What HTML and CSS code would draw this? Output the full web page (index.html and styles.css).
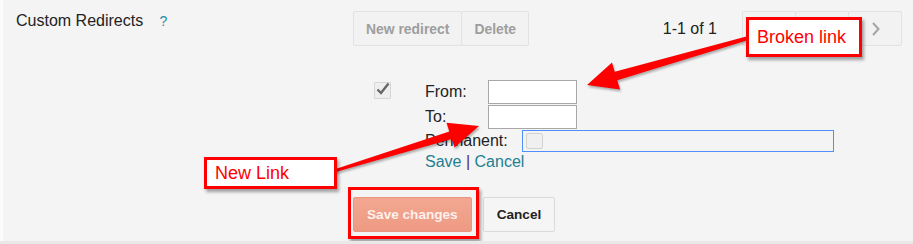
FILE: index.html
```html
<!DOCTYPE html>
<html lang="en">
<head>
    <meta charset="UTF-8">
    <title>Custom Redirects</title>
    <link rel="stylesheet" href="styles.css">
</head>
<body>
    <div class="panel">
        <div class="section">
            <div class="section-label">
                Custom Redirects <span class="help">?</span>
            </div>
            <div class="section-body">
                <div class="toolbar">
                    <div class="btn-group">
                        <button class="tb-btn">New redirect</button>
                        <button class="tb-btn">Delete</button>
                    </div>
                    <div class="pager">
                        <span class="count">1-1 of 1</span>
                        <div class="btn-group">
                            <button class="pg-btn"></button>
                            <button class="pg-btn"></button>
                            <button class="pg-btn">
                                <svg width="8" height="14" viewBox="0 0 8 14"><polyline points="1,1 6.5,7 1,13" fill="none" stroke="#a3a3a3" stroke-width="2"/></svg>
                            </button>
                        </div>
                    </div>
                </div>

                <div class="editor">
                    <div class="check-col">
                        <span class="check">
                            <svg width="17" height="17" viewBox="0 0 17 17"><polyline points="3.5,8.5 7,12 14.5,2.5" fill="none" stroke="#666" stroke-width="2.4"/></svg>
                        </span>
                    </div>
                    <div class="fields">
                        <div class="field">
                            <label for="from">From:</label>
                            <input type="text" id="from" class="txt">
                        </div>
                        <div class="field">
                            <label for="to">To:</label>
                            <input type="text" id="to" class="txt">
                        </div>
                        <div class="perm">
                            <span>Permanent:</span>
                            <div class="perm-box"><span class="cb"></span></div>
                        </div>
                        <div class="links">
                            <a href="#">Save</a> <span class="sep">|</span> <a href="#">Cancel</a>
                        </div>
                    </div>
                </div>

                <div class="actions">
                    <button class="btn-save">Save changes</button>
                    <button class="btn-cancel">Cancel</button>
                </div>
            </div>
        </div>

        <!-- annotations -->
        <svg class="arrows" width="913" height="244" viewBox="0 0 913 244">
            <polygon points="750,35.5 614.7,71.7 612,62.6 587,85 620,89.4 617.3,80.3 750,39.5" />
            <polygon points="334,169.5 449.3,131.4 446.5,122.8 479,126 454.5,147.6 451.7,139 334,172.5" />
        </svg>
        <div class="note note-broken">Broken link</div>
        <div class="note note-new">New Link</div>
        <div class="highlight"></div>
    </div>
</body>
</html>
```

FILE: styles.css
```css
body {
    margin: 0;
    font-family: "Liberation Sans", Arial, sans-serif;
    background-color: #e9e9e9;
    color: #222;
}
.panel {
    position: relative;
    height: 241px;
    border-left: 3px solid #fbfbfb;
    background-color: #f4f4f4;
    overflow: hidden;
}
.section {
    display: flex;
    padding-top: 11px;
}
.section-label {
    width: 350px;
    padding-left: 13px;
    box-sizing: border-box;
    font-size: 16px;
    line-height: 19px;
    flex-shrink: 0;
}
.help {
    margin-left: 12px;
    color: #2a8ca6;
    font-size: 14px;
}
.section-body {
    flex: 1;
    padding-right: 11px;
}
.toolbar {
    display: flex;
    align-items: center;
    height: 35px;
}
.btn-group {
    display: flex;
}
button {
    font-family: inherit;
    cursor: pointer;
}
.tb-btn {
    height: 35px;
    padding: 0 12px;
    border: 1px solid #e2e2e2;
    background-color: #f2f2f2;
    color: #9e9e9e;
    font-weight: bold;
    font-size: 13.9px;
    border-radius: 2px;
}
.tb-btn + .tb-btn,
.pg-btn + .pg-btn {
    margin-left: -1px;
}
.pager {
    margin-left: auto;
    display: flex;
    align-items: center;
}
.count {
    margin-right: 25px;
    font-size: 16px;
}
.pg-btn {
    width: 54px;
    height: 35px;
    padding: 0;
    border: 1px solid #e2e2e2;
    background-color: #f2f2f2;
    border-radius: 2px;
    display: flex;
    align-items: center;
    justify-content: center;
}
.pg-btn svg {
    margin-left: 2px;
}
.editor {
    display: flex;
    margin-top: 34px;
}
.check-col {
    width: 72px;
    padding-left: 21px;
    padding-top: 2px;
    box-sizing: border-box;
}
.check {
    display: block;
    width: 17px;
    height: 17px;
    box-sizing: border-box;
    border: 1px solid #d6d6d6;
    background-color: #eeeeee;
    border-radius: 1px;
}
.check svg {
    display: block;
    margin: -2px 0 0 -1px;
}
.fields {
    font-size: 16px;
}
.field {
    display: flex;
    align-items: center;
    height: 24px;
    margin-bottom: 1px;
}
.field label {
    width: 63px;
}
.txt {
    width: 89px;
    height: 24px;
    box-sizing: border-box;
    border: 1px solid #a8a8a8;
    background-color: #fff;
    margin: 0;
    padding: 0 4px;
}
.perm {
    display: flex;
    align-items: center;
    height: 22px;
}
.perm-box {
    margin-left: 14px;
    width: 312px;
    height: 22px;
    box-sizing: border-box;
    border: 1px solid #4d90fe;
    display: flex;
    align-items: center;
    padding-left: 3px;
}
.cb {
    width: 17px;
    height: 16px;
    box-sizing: border-box;
    border: 1px solid #d2d2d2;
    border-radius: 2px;
    background-color: #f0f0f0;
}
.links {
    line-height: 20px;
}
.links a {
    color: #1e7f92;
    text-decoration: none;
}
.sep {
    color: #5b2a55;
}
.actions {
    display: flex;
    gap: 11px;
    margin-top: 25px;
}
.btn-save,
.btn-cancel {
    height: 35px;
    padding: 0 13px;
    font-weight: bold;
    font-size: 13.6px;
    border-radius: 2px;
}
.btn-save {
    border: 1px solid #ea9680;
    background: linear-gradient(#f3a791, #ee9a83);
    color: #fdf1ed;
}
.btn-cancel {
    border: 1px solid #dadada;
    background-color: #f5f5f5;
    color: #222;
}
.arrows {
    position: absolute;
    left: -3px;
    top: 0;
    fill: #ff0000;
    filter: drop-shadow(1px 2px 1px rgba(0, 0, 0, 0.3));
    pointer-events: none;
}
.note {
    position: absolute;
    box-sizing: border-box;
    border: 3px solid #ff0000;
    background-color: #fff;
    color: #ff0000;
    font-size: 18px;
    box-shadow: 2px 3px 3px rgba(0, 0, 0, 0.35);
    display: flex;
    align-items: center;
}
.note-broken {
    left: 743px;
    top: 17px;
    width: 116px;
    height: 40px;
    padding-left: 8px;
}
.note-new {
    left: 201px;
    top: 157px;
    width: 133px;
    height: 32px;
    padding-left: 8px;
}
.highlight {
    position: absolute;
    left: 345px;
    top: 187px;
    width: 131px;
    height: 52px;
    box-sizing: border-box;
    border: 3px solid #ff0000;
    box-shadow: 2px 3px 3px rgba(0, 0, 0, 0.35);
}
```
